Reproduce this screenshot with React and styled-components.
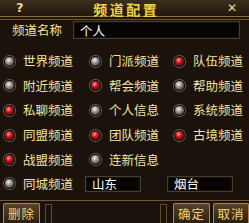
import React from 'react';
import styled, { createGlobalStyle } from 'styled-components';

const Global = createGlobalStyle`
  html, body { margin: 0; padding: 0; background: #1a120a; }
  body { font-family: "Noto Sans CJK SC", "Noto Sans", sans-serif; }
`;

const Win = styled.div`
  width: 249px;
  height: 223px;
  overflow: hidden;
  background: #1b130b;
  display: flex;
  flex-direction: column;
  font-size: 12.5px;
  color: #f3e2a2;
`;

const TitleBar = styled.div`
  height: 16px;
  background: linear-gradient(#3b2d1b, #22180d);
  display: flex;
  align-items: center;
  justify-content: space-between;
  padding: 0 12px 0 16px;
  border-bottom: 1px solid #8a6f45;
  box-shadow: 0 2px 0 #1d140a, 0 3px 0 #6e5736;
`;

const Title = styled.div`
  font-size: 14px;
  font-weight: bold;
  letter-spacing: 2.5px;
  color: #f2d43c;
  line-height: 14px;
  padding: 1px 0 0 2px;
`;

const Corner = styled.span`
  font-weight: bold;
  font-size: ${p => p.$size || 13}px;
  color: #e8d7a0;
  line-height: 14px;
  font-family: "DejaVu Sans", sans-serif;
`;

const NameRow = styled.div`
  display: flex;
  align-items: center;
  margin: 4px 9px 0 12px;
  gap: 11px;
`;

const Label = styled.span`
  white-space: nowrap;
  line-height: 16px;
`;

const Field = styled.div`
  height: ${p => p.$h || 18}px;
  width: ${p => p.$w ? p.$w + 'px' : 'auto'};
  flex: ${p => p.$w ? 'none' : 1};
  margin-left: ${p => p.$ml || 0}px;
  box-sizing: border-box;
  background: #070503;
  border: 1px solid #4a3d2c;
  box-shadow: inset 0 0 0 1px #16100a;
  color: #ffffff;
  display: flex;
  align-items: center;
  padding-left: 6px;
  font-size: 12.5px;
`;

const Grid = styled.div`
  display: grid;
  grid-template-columns: 86px 84px 1fr;
  grid-auto-rows: 24.6px;
  padding-left: 4px;
  margin-top: 10px;
  align-items: center;
`;

const Item = styled.div`
  display: flex;
  align-items: center;
  gap: 8px;
`;

const Dot = styled.span`
  width: 9px;
  height: 9px;
  border-radius: 50%;
  flex: none;
  border: 1px solid #0c0805;
  box-shadow: 0 0 0 1px #6a6158;
  background: ${p => p.$on
    ? 'radial-gradient(circle at 40% 35%, #ff9a9a 0, #c81818 35%, #5a0404 80%)'
    : 'radial-gradient(circle at 40% 35%, #f4f4f4 0, #9a9a9a 35%, #3a3a3a 80%)'};
`;

const CityRow = styled.div`
  display: flex;
  align-items: center;
  padding-left: 4px;
  height: 24px;
`;

const Footer = styled.div`
  margin-top: auto;
  border-top: 1px solid #6e5736;
  box-shadow: inset 0 1px 0 #1d140a;
  display: flex;
  align-items: flex-end;
  justify-content: space-between;
  height: 22px;
  padding: 0 0 0 3px;
`;

const Btn = styled.button`
  width: ${p => p.$w || 37}px;
  height: 20px;
  padding: 0;
  font-family: inherit;
  font-size: 12.5px;
  line-height: 17px;
  color: #f0d47a;
  background: linear-gradient(#5a4326, #2b1f10);
  border: 1px solid #a88a56;
  border-bottom: none;
  border-radius: 2px 2px 0 0;
  letter-spacing: 1px;
`;

const Knot = styled.span`
  width: 5px;
  height: 18px;
  border: 1px solid #5d4a30;
  border-bottom: none;
  margin: 0 3px 0 2px;
`;

const Group = styled.div`
  display: flex;
  align-items: flex-end;
  gap: 3px;
`;

const channels = [
  ['世界频道', false], ['门派频道', false], ['队伍频道', true],
  ['附近频道', false], ['帮会频道', true], ['帮助频道', false],
  ['私聊频道', true], ['个人信息', false], ['系统频道', false],
  ['同盟频道', true], ['团队频道', true], ['古境频道', true],
  ['战盟频道', true], ['连新信息', false],
];

export default function App() {
  return (
    <Win>
      <Global />
      <TitleBar>
        <Corner $size={13}>?</Corner>
        <Title>频道配置</Title>
        <Corner $size={12}>✕</Corner>
      </TitleBar>
      <NameRow>
        <Label>频道名称</Label>
        <Field>个人</Field>
      </NameRow>
      <Grid>
        {channels.map(([name, on]) => (
          <Item key={name}>
            <Dot $on={on} />
            <Label>{name}</Label>
          </Item>
        ))}
      </Grid>
      <CityRow>
        <Item>
          <Dot />
          <Label>同城频道</Label>
        </Item>
        <Field $w={56} $h={16} $ml={12}>山东</Field>
        <Field $w={66} $h={16} $ml={26}>烟台</Field>
      </CityRow>
      <Footer>
        <Group>
          <Btn>删除</Btn>
          <Knot />
        </Group>
        <Group>
          <Knot />
          <Btn>确定</Btn>
          <Btn $w={36}>取消</Btn>
        </Group>
      </Footer>
    </Win>
  );
}
